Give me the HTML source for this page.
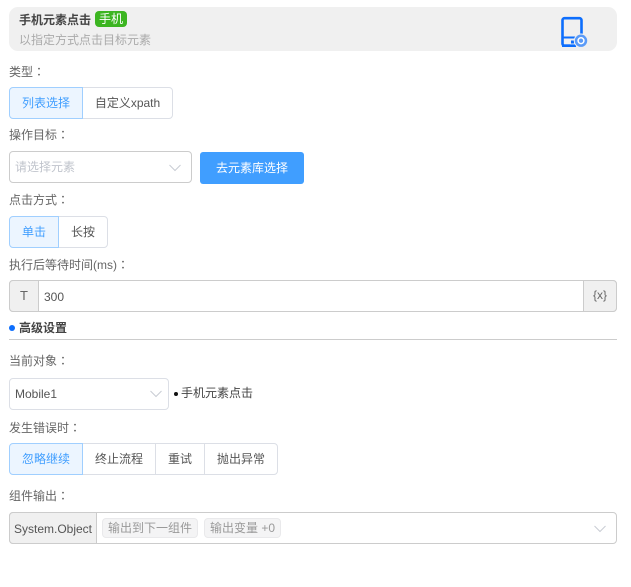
<!DOCTYPE html>
<html><head><meta charset="utf-8">
<style>
html,body{margin:0;padding:0;background:#fff}
body{width:631px;height:587px;position:relative;overflow:hidden;font-family:"Liberation Sans","Noto Sans CJK SC",sans-serif;font-size:12px;color:#666}
.a{position:absolute;white-space:nowrap}
.l{position:absolute;left:9px;height:16px;line-height:16px;white-space:nowrap;color:#666}
.l i{font-style:normal;font-family:"Noto Sans CJK TC",sans-serif}
.b{position:absolute;box-sizing:border-box;height:32px;line-height:31px;text-align:center;border:1px solid #dcdfe6;color:#555;background:#fff;white-space:nowrap}
.on{background:#ecf5ff;border-color:#a0cfff;color:#409eff;z-index:1}
</style></head><body>
<div class="a" style="left:9px;top:7px;width:608px;height:44px;background:#f0f0f0;border-radius:9px"></div>
<div class="a" style="left:19px;top:12px;line-height:16px;font-weight:bold;color:#444">手机元素点击</div>
<div class="a" style="left:95px;top:11px;width:32px;height:16px;line-height:17px;background:#3cb521;border-radius:4px;color:#fff;text-align:center">手机</div>
<div class="a" style="left:19px;top:32px;line-height:16px;color:#aaa">以指定方式点击目标元素</div>
<svg class="a" style="left:555px;top:12px" width="36" height="38" viewBox="0 0 36 38">
<path d="M9.5 6.2H24.5A2 2 0 0 1 26.5 8.2V25M15 33.7H9.5A2 2 0 0 1 7.5 31.7V8.2A2 2 0 0 1 9.5 6.2" fill="none" stroke="#0d6efd" stroke-width="2.6"/>
<path d="M7 25.5H21" stroke="#0d6efd" stroke-width="2"/>
<path d="M7 33.7H21" stroke="#0d6efd" stroke-width="2.6"/>
<rect x="16" y="28.5" width="3" height="3" fill="#0d6efd"/>
<circle cx="26" cy="28.7" r="7.2" fill="#f0f0f0"/>
<circle cx="26" cy="28.7" r="6.2" fill="#5b9bf8"/>
<circle cx="26" cy="28.7" r="2.9" fill="none" stroke="#fff" stroke-width="1.5"/>
</svg>

<div class="l" style="top:64px">类型<i>：</i></div>
<div class="b on" style="left:9px;top:87px;width:74px;border-radius:4px 0 0 4px">列表选择</div>
<div class="b" style="left:82px;top:87px;width:91px;border-radius:0 4px 4px 0">自定义xpath</div>

<div class="l" style="top:127px">操作目标<i>：</i></div>
<div class="b" style="left:9px;top:151px;width:183px;border-color:#ccc;border-radius:4px;text-align:left;padding-left:5px;color:#c0c4cc">请选择元素</div>
<svg class="a" style="left:168px;top:163px" width="14" height="10"><path d="M1.5 2L7 7.5L12.5 2" fill="none" stroke="#c8ccd4" stroke-width="1"/></svg>
<div class="a" style="left:200px;top:152px;width:104px;height:32px;line-height:32px;background:#409eff;border-radius:3px;color:#fff;text-align:center">去元素库选择</div>

<div class="l" style="top:192px">点击方式<i>：</i></div>
<div class="b on" style="left:9px;top:216px;width:50px;border-radius:4px 0 0 4px">单击</div>
<div class="b" style="left:58px;top:216px;width:50px;border-radius:0 4px 4px 0">长按</div>

<div class="l" style="top:257px">执行后等待时间(ms)<i>：</i></div>
<div class="a" style="left:9px;top:280px;width:608px;height:32px;box-sizing:border-box;border:1px solid #ccc;border-radius:4px"></div>
<div class="a" style="left:9px;top:280px;width:30px;height:32px;box-sizing:border-box;background:#f0f0f0;border:1px solid #ccc;border-radius:4px 0 0 4px;line-height:29px;text-align:center;color:#666;font-size:13px">T</div>
<div class="a" style="left:44px;top:288px;line-height:18px;color:#555">300</div>
<div class="a" style="left:583px;top:280px;width:34px;height:32px;box-sizing:border-box;background:#f0f0f0;border:1px solid #ccc;border-radius:0 4px 4px 0;line-height:29px;text-align:center;color:#666;font-size:12px">{x}</div>

<div class="a" style="left:9px;top:325px;width:6px;height:6px;border-radius:50%;background:#0d6efd"></div>
<div class="a" style="left:19px;top:320px;line-height:16px;font-weight:bold;color:#444">高级设置</div>
<div class="a" style="left:9px;top:339px;width:608px;height:1px;background:#ccc"></div>

<div class="l" style="top:353px">当前对象<i>：</i></div>
<div class="b" style="left:9px;top:378px;width:160px;border-radius:4px;text-align:left;padding-left:5px;color:#555">Mobile1</div>
<svg class="a" style="left:149px;top:389px" width="14" height="10"><path d="M1.5 2L7 7.5L12.5 2" fill="none" stroke="#c8ccd4" stroke-width="1"/></svg>
<div class="a" style="left:174px;top:392px;width:4px;height:4px;border-radius:50%;background:#111"></div>
<div class="a" style="left:181px;top:385px;line-height:16px;color:#444">手机元素点击</div>

<div class="l" style="top:420px">发生错误时<i>：</i></div>
<div class="b on" style="left:9px;top:443px;width:74px;border-radius:4px 0 0 4px">忽略继续</div>
<div class="b" style="left:82px;top:443px;width:74px">终止流程</div>
<div class="b" style="left:155px;top:443px;width:50px">重试</div>
<div class="b" style="left:204px;top:443px;width:74px;border-radius:0 4px 4px 0">抛出异常</div>

<div class="l" style="top:488px">组件输出<i>：</i></div>
<div class="a" style="left:9px;top:512px;width:608px;height:32px;box-sizing:border-box;border:1px solid #ccc;border-radius:4px"></div>
<div class="a" style="left:9px;top:512px;width:88px;height:32px;box-sizing:border-box;background:#f0f0f0;border:1px solid #ccc;border-radius:4px 0 0 4px;line-height:32px;text-align:center;color:#555">System.Object</div>
<div class="a" style="left:102px;top:518px;width:96px;height:20px;box-sizing:border-box;background:#f4f4f5;border:1px solid #e9e9eb;border-radius:4px;line-height:18px;text-align:center;color:#999">输出到下一组件</div>
<div class="a" style="left:204px;top:518px;width:77px;height:20px;box-sizing:border-box;background:#f4f4f5;border:1px solid #e9e9eb;border-radius:4px;line-height:18px;text-align:center;color:#999">输出变量 +0</div>
<svg class="a" style="left:593px;top:524px" width="14" height="10"><path d="M1.5 2L7 7.5L12.5 2" fill="none" stroke="#c8ccd4" stroke-width="1"/></svg>
</body></html>
